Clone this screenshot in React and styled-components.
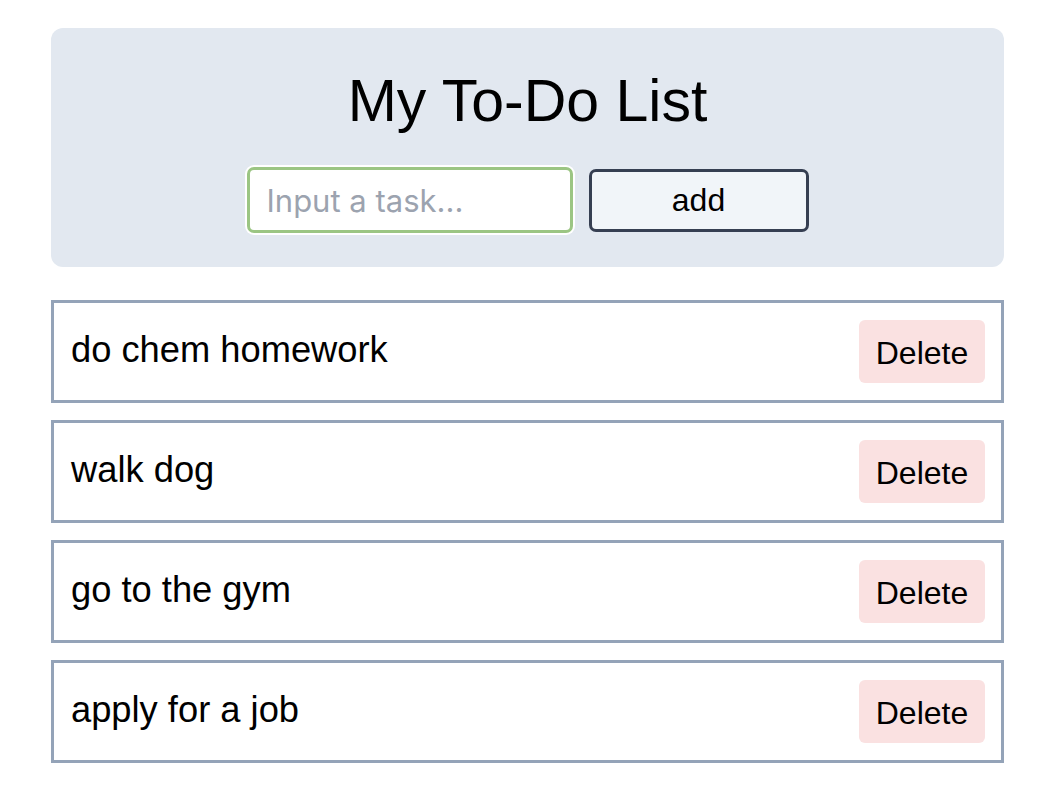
import React, { useState } from "react";
import styled, { createGlobalStyle } from "styled-components";

const GlobalStyle = createGlobalStyle`
    body {
        margin: 0;
        background: #FFF;
        font-family: "Liberation Sans", Arial, sans-serif;
        color: #000;
    }
`;

const initialTasks = ["do chem homework", "walk dog", "go to the gym", "apply for a job"];

const App = () => {
    const [tasks, setTasks] = useState(initialTasks);
    const [text, setText] = useState("");

    const addTask = () => {
        if (!text.trim()) return;
        setTasks([...tasks, text.trim()]);
        setText("");
    };

    return (
        <Page>
            <GlobalStyle />
            <HeaderCard>
                <Title>My To-Do List</Title>
                <InputRow>
                    <TaskInput
                        type="text"
                        placeholder="Input a task..."
                        value={text}
                        onChange={(e) => setText(e.target.value)}
                    />
                    <AddButton onClick={addTask}>add</AddButton>
                </InputRow>
            </HeaderCard>
            <TaskList>
                {tasks.map((task, i) => (
                    <TaskItem key={i}>
                        <TaskText>{task}</TaskText>
                        <DeleteButton onClick={() => setTasks(tasks.filter((_, j) => j !== i))}>
                            Delete
                        </DeleteButton>
                    </TaskItem>
                ))}
            </TaskList>
        </Page>
    );
};

const Page = styled.div`
    padding: 28px 46px 0 51px;
`;

const HeaderCard = styled.div`
    background: #E2E8F0;
    border-radius: 12px;
    padding: 40px 20px 34px;
    display: flex;
    flex-direction: column;
    align-items: center;
`;

const Title = styled.h1`
    margin: 0 0 33px;
    font-size: 59px;
    font-weight: 400;
    line-height: 66px;
`;

const InputRow = styled.div`
    display: flex;
    align-items: center;
    gap: 16px;
`;

const TaskInput = styled.input`
    box-sizing: border-box;
    width: 326px;
    height: 66px;
    border: 3px solid #9BC583;
    border-radius: 7px;
    box-shadow: 0 0 0 2px #FFF;
    background: #FFF;
    padding: 0 14px 0 17px;
    font-family: Inter, "Liberation Sans", sans-serif;
    font-size: 31px;
    outline: none;

    &::placeholder {
        color: #9CA3AF;
    }
`;

const AddButton = styled.button`
    box-sizing: border-box;
    width: 220px;
    height: 63px;
    border: 3px solid #363F52;
    border-radius: 7px;
    background: #F1F5F9;
    font-family: "Liberation Sans", Arial, sans-serif;
    font-size: 32px;
    color: #000;
    cursor: pointer;
`;

const TaskList = styled.ul`
    list-style: none;
    margin: 33px 0 0;
    padding: 0;
    display: flex;
    flex-direction: column;
    gap: 17px;
`;

const TaskItem = styled.li`
    box-sizing: border-box;
    height: 103px;
    border: 3px solid #94A3B8;
    padding: 17px 16px 17px 17px;
    display: flex;
    justify-content: space-between;
    align-items: flex-start;
`;

const TaskText = styled.span`
    font-size: 36.3px;
    line-height: 41px;
    padding-top: 9px;
`;

const DeleteButton = styled.button`
    box-sizing: border-box;
    width: 126px;
    height: 63px;
    border: none;
    border-radius: 6px;
    background: #FAE1E1;
    font-family: "Liberation Sans", Arial, sans-serif;
    font-size: 32px;
    color: #000;
    padding: 4px 0 0;
    cursor: pointer;
`;

export default App;
